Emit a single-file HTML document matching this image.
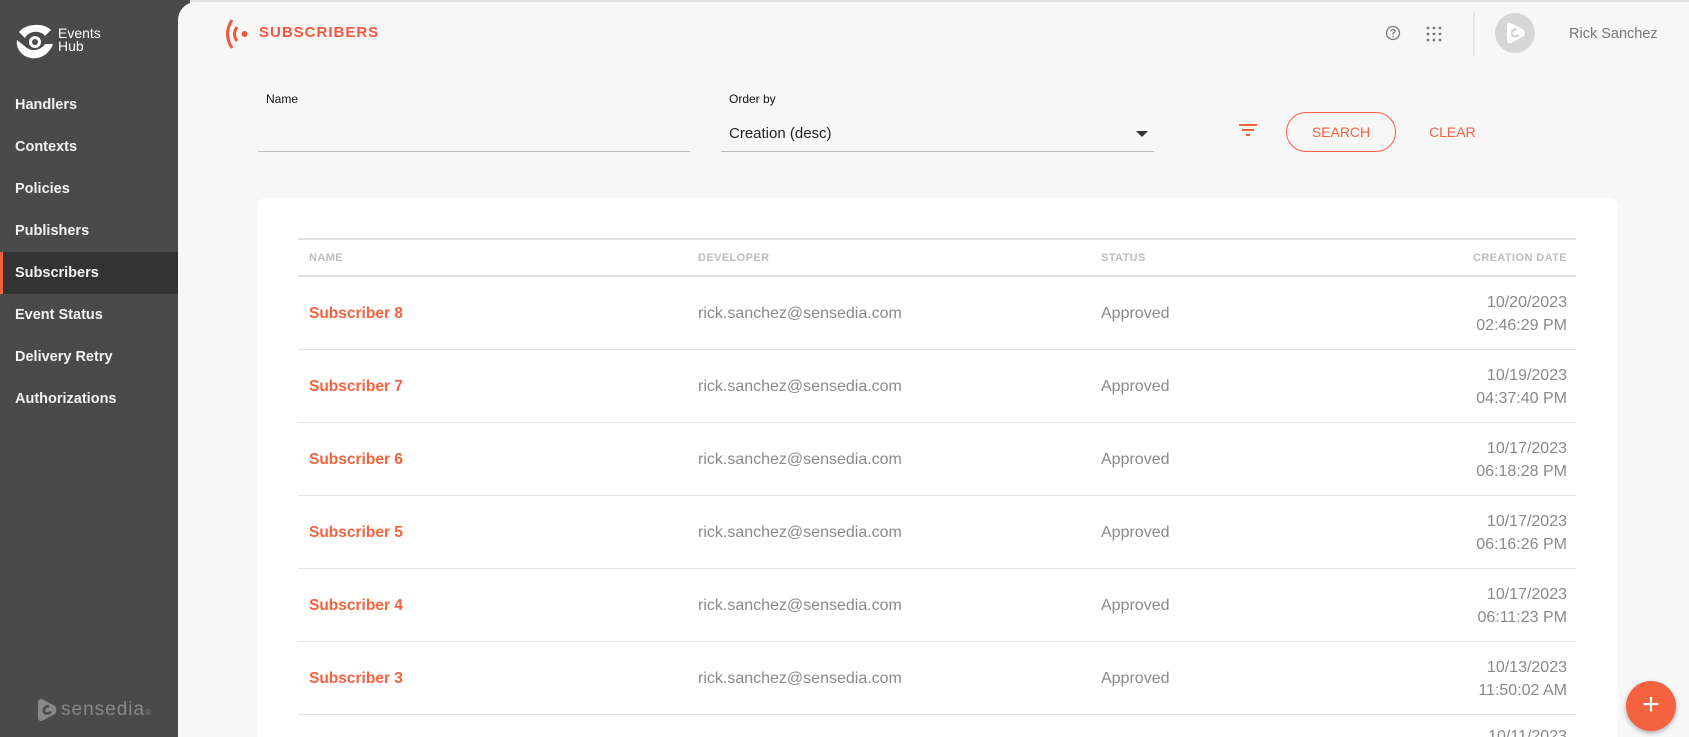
<!DOCTYPE html>
<html><head><meta charset="utf-8"><style>
*{margin:0;padding:0;box-sizing:border-box}
html,body{width:1689px;height:737px;overflow:hidden}
body{background:#e2e2e2;font-family:"Liberation Sans",Arial,sans-serif;position:relative}
.side{position:absolute;left:0;top:0;width:190px;height:737px;background:#4a4a4a}
.nav{position:absolute;left:0;width:178px;height:42px;color:#f2f2f2;font-weight:bold;font-size:14.5px;padding-left:15px;line-height:42px}
.nav.act{background:#333;border-left:3px solid #f4623f;padding-left:12px}
.main{position:absolute;left:178px;top:2px;width:1511px;height:735px;background:#f7f7f7;border-top-left-radius:18px}
.abs{position:absolute}
.card{position:absolute;left:258px;top:198px;width:1360px;height:539px;background:#fff;border-radius:8px 8px 0 0}
.hd{position:absolute;top:252px;font-size:11px;font-weight:bold;color:#bdbdbd;letter-spacing:.4px;white-space:nowrap}
.row{position:absolute;left:298px;width:1278px;height:73px;border-bottom:1px solid #e3e3e3}
.row div{position:absolute;top:0;line-height:73px;font-size:16px;color:#8a8a8a}
.row .n{left:11px;color:#f4623f;font-weight:bold;font-size:15.5px}
.row .d{left:400px}.row .s{left:803px}
.row .t{right:9px;line-height:23px;top:14px;text-align:right}
</style></head><body>
<div class="side">
<svg class="abs" style="left:15px;top:24px" width="40" height="36" viewBox="0 0 40 36"><path d="M4 8 C10 0 28 -2 36 6 L30 12 C26 6 14 6 10 14 Z M2 16 C0 26 10 36 22 34 C30 33 36 26 38 20 L30 20 C26 26 18 28 12 24 Z" fill="#fff"/><circle cx="20" cy="18" r="6" fill="#fff"/><circle cx="20" cy="18" r="3" fill="#4a4a4a"/></svg>
<div class="abs" style="left:58px;top:27px;color:#fff;font-size:14px;line-height:13px">Events<br>Hub</div>
<div class="nav" style="top:84px">Handlers</div>
<div class="nav" style="top:126px">Contexts</div>
<div class="nav" style="top:168px">Policies</div>
<div class="nav" style="top:210px">Publishers</div>
<div class="nav act" style="top:252px">Subscribers</div>
<div class="nav" style="top:294px">Event Status</div>
<div class="nav" style="top:336px">Delivery Retry</div>
<div class="nav" style="top:378px">Authorizations</div>
<svg class="abs" style="left:35px;top:698px" width="24" height="24" viewBox="0 0 24 24"><path d="M3 4 Q3 1 7 1 L20 8 Q23 12 20 16 L7 23 Q3 23 3 20Z" fill="#888"/><path d="M14 8 Q8 9 9 14 Q11 17 16 14" stroke="#4a4a4a" stroke-width="2.5" fill="none"/></svg>
<div class="abs" style="left:61px;top:699px;color:#888;font-size:19px;letter-spacing:1px">sensedia<span style="font-size:8px">®</span></div>
</div>
<div class="main"></div>
<svg class="abs" style="left:223px;top:18px" width="26" height="32" viewBox="0 0 26 32"><path d="M9 2 Q0 16 9 30" stroke="#f4573c" stroke-width="3" fill="none"/><path d="M14 9 Q9 16 14 23" stroke="#f4573c" stroke-width="3" fill="none"/><circle cx="21.5" cy="16" r="3" fill="#f4573c"/></svg>
<div class="abs" style="left:259px;top:24px;color:#f4573c;font-weight:bold;font-size:15px;letter-spacing:1px">SUBSCRIBERS</div>
<svg class="abs" style="left:1385px;top:25px" width="16" height="16" viewBox="0 0 16 16"><circle cx="8" cy="8" r="6.5" stroke="#777" stroke-width="1.3" fill="none"/><path d="M6 6.3 Q6 4.5 8 4.5 Q10 4.5 10 6.2 Q10 7.3 8 8.2 L8 9.5" stroke="#777" stroke-width="1.3" fill="none"/><circle cx="8" cy="11.5" r=".8" fill="#777"/></svg>
<svg class="abs" style="left:1426px;top:26px" width="16" height="16" viewBox="0 0 16 16" fill="#777"><circle cx="2" cy="2" r="1.4"/><circle cx="8" cy="2" r="1.4"/><circle cx="14" cy="2" r="1.4"/><circle cx="2" cy="8" r="1.4"/><circle cx="8" cy="8" r="1.4"/><circle cx="14" cy="8" r="1.4"/><circle cx="2" cy="14" r="1.4"/><circle cx="8" cy="14" r="1.4"/><circle cx="14" cy="14" r="1.4"/></svg>
<div class="abs" style="left:1473px;top:12px;width:2px;height:44px;background:#e6e6e6"></div>
<div class="abs" style="left:1495px;top:13px;width:40px;height:40px;border-radius:50%;background:#d6d6d6"></div>
<svg class="abs" style="left:1503px;top:21px" width="24" height="24" viewBox="0 0 24 24"><path d="M4 4 Q4 1 8 2 L21 9 Q23 12 21 15 L8 22 Q4 23 4 20Z" fill="#fff"/><path d="M14 8 Q8 9 9 14 Q11 17 16 14" stroke="#d6d6d6" stroke-width="2.2" fill="none"/></svg>
<div class="abs" style="left:1569px;top:26px;color:#777;font-size:14.5px">Rick Sanchez</div>
<div class="abs" style="left:266px;top:92px;font-size:12px;color:#111">Name</div>
<div class="abs" style="left:258px;top:151px;width:432px;height:1px;background:#bbb"></div>
<div class="abs" style="left:729px;top:92px;font-size:12px;color:#111">Order by</div>
<div class="abs" style="left:729px;top:125px;font-size:15px;color:#222">Creation (desc)</div>
<div class="abs" style="left:1136px;top:131px;border-left:6px solid transparent;border-right:6px solid transparent;border-top:6px solid #333"></div>
<div class="abs" style="left:721px;top:151px;width:433px;height:1px;background:#bbb"></div>
<svg class="abs" style="left:1239px;top:123px" width="18" height="14" viewBox="0 0 18 14" fill="#f4623f"><rect x="0" y="1" width="18" height="2"/><rect x="3" y="6" width="12" height="2"/><rect x="7" y="11" width="4" height="2"/></svg>
<div class="abs" style="left:1286px;top:112px;width:110px;height:40px;border:1px solid #f4623f;border-radius:20px;color:#f4623f;font-size:14px;text-align:center;line-height:38px">SEARCH</div>
<div class="abs" style="left:1429px;top:124px;color:#f4623f;font-size:14px">CLEAR</div>
<div class="card"></div>
<div class="abs" style="left:298px;top:238px;width:1278px;height:2px;background:#e0e0e0"></div>
<div class="hd" style="left:309px">NAME</div>
<div class="hd" style="left:698px">DEVELOPER</div>
<div class="hd" style="left:1101px">STATUS</div>
<div class="hd" style="left:1467px;width:100px;text-align:right">CREATION DATE</div>
<div class="abs" style="left:298px;top:275px;width:1278px;height:2px;background:#e0e0e0"></div>
<div class="row" style="top:277px"><div class="n">Subscriber 8</div><div class="d">rick.sanchez@sensedia.com</div><div class="s">Approved</div><div class="t">10/20/2023<br>02:46:29 PM</div></div>
<div class="row" style="top:350px"><div class="n">Subscriber 7</div><div class="d">rick.sanchez@sensedia.com</div><div class="s">Approved</div><div class="t">10/19/2023<br>04:37:40 PM</div></div>
<div class="row" style="top:423px"><div class="n">Subscriber 6</div><div class="d">rick.sanchez@sensedia.com</div><div class="s">Approved</div><div class="t">10/17/2023<br>06:18:28 PM</div></div>
<div class="row" style="top:496px"><div class="n">Subscriber 5</div><div class="d">rick.sanchez@sensedia.com</div><div class="s">Approved</div><div class="t">10/17/2023<br>06:16:26 PM</div></div>
<div class="row" style="top:569px"><div class="n">Subscriber 4</div><div class="d">rick.sanchez@sensedia.com</div><div class="s">Approved</div><div class="t">10/17/2023<br>06:11:23 PM</div></div>
<div class="row" style="top:642px"><div class="n">Subscriber 3</div><div class="d">rick.sanchez@sensedia.com</div><div class="s">Approved</div><div class="t">10/13/2023<br>11:50:02 AM</div></div>
<div class="abs" style="left:1467px;top:729px;width:100px;text-align:right;font-size:16px;color:#8a8a8a;line-height:16px;height:8px;overflow:hidden">10/11/2023</div>
<div class="abs" style="left:1626px;top:681px;width:50px;height:50px;border-radius:50%;background:#f4623f;color:#fff;font-size:30px;text-align:center;line-height:48px;box-shadow:0 2px 5px rgba(0,0,0,.3)">+</div>
</body></html>
